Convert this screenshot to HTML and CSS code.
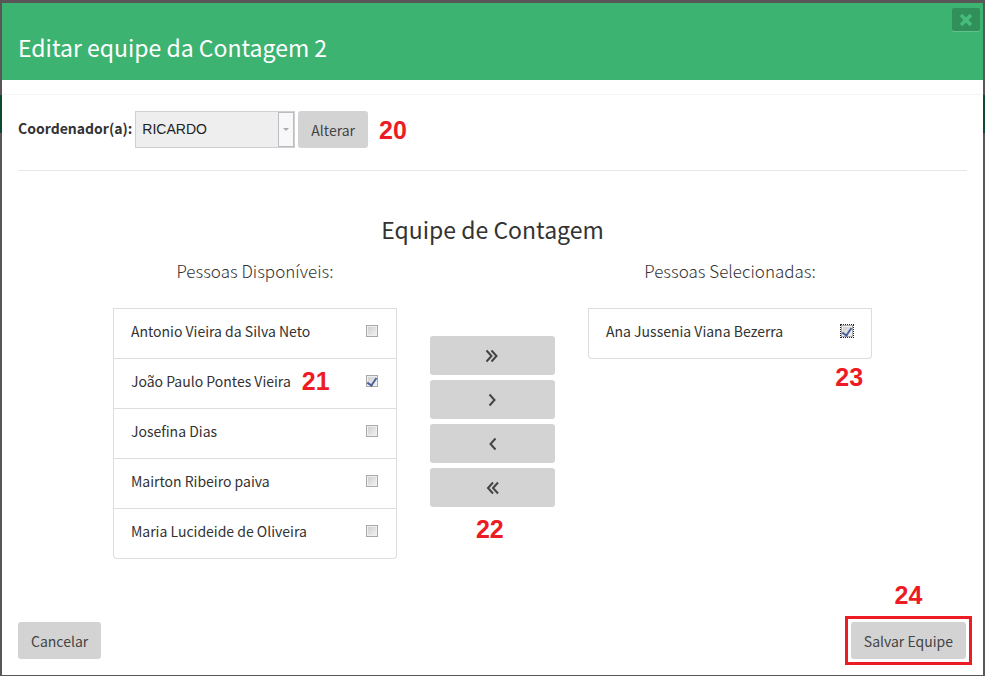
FILE: index.html
```html
<!DOCTYPE html>
<html lang="pt-BR">
<head>
<meta charset="utf-8">
<meta name="viewport" content="width=device-width, initial-scale=1">
<title>Editar equipe da Contagem 2</title>
<link rel="stylesheet" href="styles.css">
</head>
<body>
<main class="modal">
  <header class="modal-header">
    <h1 class="modal-title">Editar equipe da Contagem 2</h1>
    <button class="close" type="button" aria-label="Fechar">
      <svg width="14" height="14" viewBox="0 0 14 14" aria-hidden="true"><path d="M2 2l10 10M12 2l-10 10" fill="none" stroke="currentColor" stroke-width="3.6"/></svg>
    </button>
  </header>

  <form class="modal-body">
    <div class="coordinator">
      <label class="coordinator-label" for="coordenador">Coordenador(a):</label>
      <span class="select-box">
        <select id="coordenador" class="select"><option>RICARDO</option></select>
        <span class="select-arrow"></span>
      </span>
      <button class="btn" type="button">Alterar</button>
      <span class="mark">20</span>
    </div>

    <h2 class="section-title">Equipe de Contagem</h2>

    <div class="team">
      <section class="people">
        <h3 class="people-title">Pessoas Disponíveis:</h3>
        <ul class="list">
          <li class="person"><label for="p1">Antonio Vieira da Silva Neto</label><input class="check" id="p1" type="checkbox"></li>
          <li class="person"><label for="p2">João Paulo Pontes Vieira</label><span class="mark mark-name">21</span><input class="check" id="p2" type="checkbox" checked></li>
          <li class="person"><label for="p3">Josefina Dias</label><input class="check" id="p3" type="checkbox"></li>
          <li class="person"><label for="p4">Mairton Ribeiro paiva</label><input class="check" id="p4" type="checkbox"></li>
          <li class="person"><label for="p5">Maria Lucideide de Oliveira</label><input class="check" id="p5" type="checkbox"></li>
        </ul>
      </section>

      <div class="transfer">
        <button class="btn btn-move" type="button" aria-label="Adicionar todos"><svg width="14" height="14" viewBox="0 0 14 14" aria-hidden="true"><path d="M1.5 1.5L6.5 7l-5 5.5M6.5 1.5l5 5.5-5 5.5"/></svg></button>
        <button class="btn btn-move" type="button" aria-label="Adicionar"><svg width="14" height="14" viewBox="0 0 14 14" aria-hidden="true"><path d="M4.5 1.5L9.5 7l-5 5.5"/></svg></button>
        <button class="btn btn-move" type="button" aria-label="Remover"><svg width="14" height="14" viewBox="0 0 14 14" aria-hidden="true"><path d="M10.5 1.5L5.5 7l5 5.5"/></svg></button>
        <button class="btn btn-move" type="button" aria-label="Remover todos"><svg width="14" height="14" viewBox="0 0 14 14" aria-hidden="true"><path d="M8 1.5L3 7l5 5.5M13 1.5L8 7l5 5.5"/></svg></button>
        <span class="mark mark-transfer">22</span>
      </div>

      <section class="people">
        <h3 class="people-title">Pessoas Selecionadas:</h3>
        <ul class="list">
          <li class="person"><label for="s1">Ana Jussenia Viana Bezerra</label><input class="check check-focus" id="s1" type="checkbox" checked></li>
        </ul>
        <span class="mark mark-selected">23</span>
      </section>
    </div>

    <footer class="actions">
      <button class="btn" type="button">Cancelar</button>
      <span class="save">
        <span class="mark mark-save">24</span>
        <button class="btn" type="submit">Salvar Equipe</button>
      </span>
    </footer>
  </form>
</main>
</body>
</html>
```
FILE: styles.css
```css
* {
  box-sizing: border-box;
}

body {
  margin: 0;
  padding: 3px 2px 1px;
  min-height: 100vh;
  display: flex;
  background: linear-gradient(#5a5657 95px, #0b4a2c 95px, #0b4a2c 133px, #5a5657 133px);
  color: #333;
  font-family: "Noto Sans CJK SC", "Noto Sans", sans-serif;
  font-size: 14px;
  line-height: 20px;
}

h1, h2, h3, ul {
  margin: 0;
  padding: 0;
  font-weight: 400;
}

.modal {
  flex: 1;
  display: flex;
  flex-direction: column;
  background: #fff;
}

.modal-header {
  position: relative;
  padding: 28px 16px 17px;
  background: #3cb371;
  color: #fff;
}

.modal-title {
  font-size: 23px;
  line-height: 32px;
}

.close {
  position: absolute;
  top: 5px;
  right: 3px;
  width: 28px;
  height: 23px;
  padding: 0;
  display: grid;
  place-items: center;
  border: 0;
  border-radius: 2px;
  background: #318f5a;
  box-shadow: 0 1px 0 #5fc48c;
  color: #45bd7b;
}

.modal-body {
  flex: 1;
  display: flex;
  flex-direction: column;
  margin-top: 14px;
  padding: 16px 16px 10px;
  border-top: 1px solid #f4f4f4;
}

.coordinator {
  display: flex;
  align-items: center;
  gap: 3px;
  padding-bottom: 22px;
  border-bottom: 1px solid #e7e7e7;
}

.coordinator-label {
  padding-bottom: 4px;
  font-weight: 700;
}

.select-box {
  display: flex;
  width: 160px;
  height: 37px;
  border: 1px solid #d0d0d4;
  background: #eee;
}

.select {
  flex: 1;
  min-width: 0;
  padding: 0 6px 2px;
  appearance: none;
  border: 0;
  background: transparent;
  color: #222;
  opacity: 1;
  font-family: "Liberation Sans", Arial, sans-serif;
  font-size: 14px;
}

.select-arrow {
  width: 16px;
  display: grid;
  place-items: center;
  border: 1px solid #bbbbc3;
  background: #f8f8f8;
}

.select-arrow::before {
  content: "";
  border: 3px solid transparent;
  border-top-color: #aaa;
  border-bottom: 0;
}

.btn {
  height: 37px;
  padding: 0 13px;
  border: 0;
  border-radius: 3px;
  background: #d3d3d3;
  color: #444;
  font: inherit;
}

.mark {
  color: #ed1c24;
  font: 700 25px/28px "Liberation Sans", Arial, sans-serif;
}

.coordinator .mark {
  margin-left: 8px;
}

.section-title {
  margin-top: 42px;
  font-size: 23px;
  line-height: 32px;
  text-align: center;
}

.team {
  width: 80%;
  margin: 14px auto 0;
  display: grid;
  grid-template-columns: 284fr 125fr 284fr;
  column-gap: 33px;
  align-items: start;
}

.people {
  position: relative;
}

.people-title {
  margin-bottom: 25px;
  font-size: 17px;
  font-weight: 300;
  line-height: 24px;
  text-align: center;
}

.list {
  border: solid #ddd;
  border-width: 0 1px 1px;
  border-radius: 0 0 4px 4px;
  list-style: none;
}

.person {
  height: 50px;
  padding: 0 18px 5px 17px;
  display: flex;
  align-items: center;
  border-top: 1px solid #ddd;
}

.check {
  width: 12px;
  height: 12px;
  margin: 0 0 0 auto;
  display: grid;
  place-items: center;
  appearance: none;
  border: 1px solid #aaa;
  background: linear-gradient(135deg, #ccc, #f4f4f4);
  box-shadow: inset 0 0 0 1px #eee;
}

.check:checked::before {
  content: "";
  width: 4px;
  height: 8px;
  border: solid #4a60a0;
  border-width: 0 2px 2px 0;
  transform: rotate(35deg);
}

.check-focus {
  outline: 1px dotted #222;
}

.mark-name {
  margin-left: 11px;
}

.transfer {
  position: relative;
  padding-top: 77px;
  display: grid;
  gap: 5px;
}

.btn-move {
  height: 39px;
  display: grid;
  place-items: center;
}

.btn-move path {
  fill: none;
  stroke: #444;
  stroke-width: 2;
}

.mark-transfer {
  position: absolute;
  top: 100%;
  left: 46px;
  margin-top: 8px;
}

.mark-selected {
  position: absolute;
  top: 100%;
  right: 9px;
  margin-top: 4px;
}

.actions {
  margin-top: auto;
  display: flex;
  align-items: center;
  justify-content: space-between;
}

.save {
  position: relative;
  margin-right: -5px;
  padding: 3px;
  border: 3px solid #ed1c24;
}

.save .btn {
  display: block;
}

.mark-save {
  position: absolute;
  bottom: 100%;
  left: 50%;
  transform: translateX(-50%);
  margin-bottom: 10px;
}
```
